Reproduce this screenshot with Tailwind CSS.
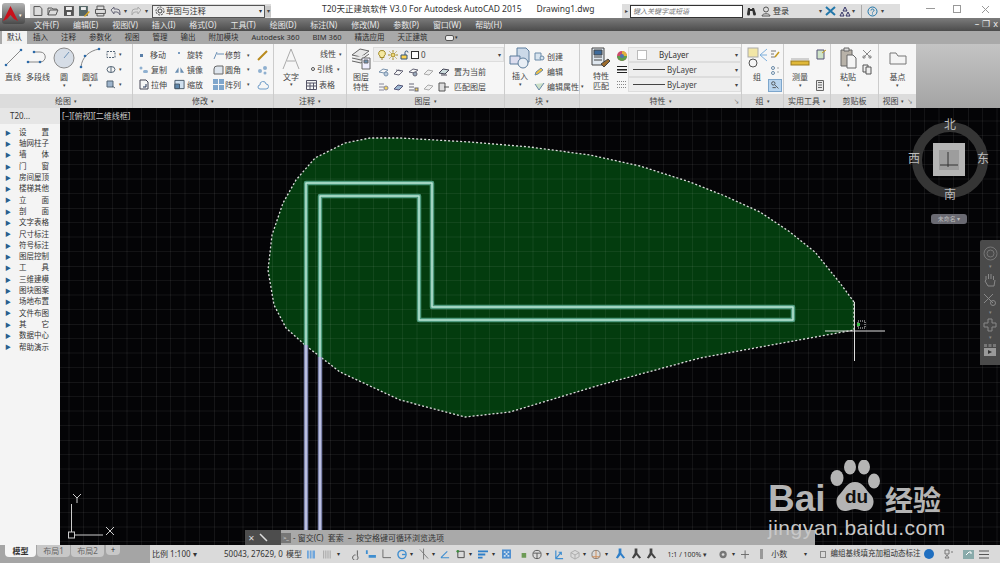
<!DOCTYPE html>
<html lang="zh-CN">
<head>
<meta charset="UTF-8">
<title>T20天正建筑软件</title>
<script src="https://cdn.jsdelivr.net/npm/@tailwindcss/browser@4"></script>
</head>
<body class="w-[1000px] h-[563px] overflow-hidden relative bg-black text-[8px] leading-none text-[#444] font-['Noto_Sans','Noto_Sans_CJK_SC',sans-serif]">

<!-- Title bar -->
<div class="h-[18px] bg-white flex items-end relative">
  <div class="w-[30px] shrink-0"></div>
  <div class="flex items-center gap-[3.500px] h-[14px] bg-[#dcdcdc] pl-[2px] w-[241px]">
    <svg class="w-[12px] h-[12px]" viewBox="0 0 12 12" fill="none" stroke="#555"><path d="M2 1.500h6l2 2v7H2z"/></svg>
    <svg class="w-[12px] h-[12px]" viewBox="0 0 12 12" fill="none" stroke="#555"><path d="M1 10V3h4l1 1h4v1M1 10l2-5h8l-2 5z"/></svg>
    <svg class="w-[12px] h-[12px]" viewBox="0 0 12 12" fill="#555"><path d="M1 1h10v10H1z"/><path d="M3 2h6v3H3zM4 7h4v3H4z" fill="#eee"/></svg>
    <svg class="w-[12px] h-[12px]" viewBox="0 0 12 12" fill="#566"><path d="M1 1h9v10H1z"/><path d="M3 2h5v3H3z" fill="#eee"/><path d="M6 11l5-5 1 1-5 5z" fill="#d9a520"/></svg>
    <svg class="w-[13px] h-[12px]" viewBox="0 0 13 12" fill="none" stroke="#555"><path d="M3 4V1h7v3M1.500 4.500h10v4h-10zM3 8v3h7V8"/></svg>
    <svg class="w-[11px] h-[10px]" viewBox="0 0 11 10" fill="none" stroke="#667"><path d="M1 4l3-3v2h3a3 3 0 0 1 3 3v3a4 4 0 0 0-3-3H4v2z"/></svg>
    <span class="text-[6px]">▾</span>
    <svg class="w-[11px] h-[10px]" viewBox="0 0 11 10" fill="none" stroke="#aaa"><path d="M10 4L7 1v2H4a3 3 0 0 0-3 3v3a4 4 0 0 1 3-3h3v2z"/></svg>
    <span class="text-[6px]">▾</span>
    <div class="w-[114px] h-[13px] bg-[#eee] border border-[#555] flex items-center pl-[2px] gap-[1px] text-[8px] text-[#333]">
      <svg class="w-[10px] h-[10px]" viewBox="0 0 10 10" fill="none" stroke="#444"><circle cx="5" cy="5" r="2"/><circle cx="5" cy="5" r="4" stroke-dasharray="2 1"/></svg>
      <span class="flex-1">草图与注释</span><span class="text-[6px] pr-[2px]">▾</span>
    </div>
    <div class="w-[6px] h-[11px] bg-[#c8c8c8] text-[6px] -ml-[3px] text-center leading-[11px]">▾</div>
  </div>
  <div class="absolute left-[322px] top-[5px] flex gap-[15px] text-[8.500px] text-[#333]">
    <span>T20天正建筑软件 V3.0 For Autodesk AutoCAD 2015</span><span>Drawing1.dwg</span>
  </div>
  <div class="absolute left-[622px] top-[4px] w-[278px] h-[14px] bg-[#dedede] flex items-center">
    <span class="w-[8px] text-center text-[6px]">▸</span>
    <div class="w-[113px] h-[13px] bg-white border border-[#333] italic text-[7px] text-[#777] pl-[2px] leading-[11px]">键入关键字或短语</div>
    <svg class="w-[11px] h-[10px] ml-[3px]" viewBox="0 0 11 10" fill="#333"><path d="M1 8l1-6h2v6a1.500 1.500 0 0 1-3 0zM6 2h2l2 6a1.500 1.500 0 0 1-3 0zM4 3h3v2H4z"/></svg>
    <svg class="w-[10px] h-[11px] ml-[4px]" viewBox="0 0 10 11" fill="none" stroke="#555"><circle cx="5" cy="3.500" r="2.500"/><path d="M1 10c0-3 8-3 8 0z"/></svg>
    <span class="ml-[2px] text-[#333] w-[46px]">登录</span>
    <span class="text-[6px]">▾</span>
    <svg class="w-[11px] h-[10px] ml-[3px]" viewBox="0 0 11 10" stroke="#27a" stroke-width="2"><path d="M1 1l9 8M10 1L1 9"/></svg>
    <svg class="w-[12px] h-[11px] ml-[3px]" viewBox="0 0 12 11" fill="none" stroke="#336"><path d="M6 1l2 4H4zM3 6l2 4H1zM9 6l2 4H7z"/></svg>
    <span class="text-[6px] ml-[1px]">▾</span>
    <div class="w-px h-[13px] bg-[#aaa] ml-[6px]"></div>
    <svg class="w-[11px] h-[11px] ml-[5px]" viewBox="0 0 11 11" fill="none" stroke="#27a"><circle cx="5.500" cy="5.500" r="4.500"/><path d="M4 4.500c0-2 3-2 3 0 0 1-1.500 1-1.500 2M5.500 7.500v1"/></svg>
    <span class="text-[6px] ml-[3px]">▾</span>
  </div>
  <div class="absolute left-[926px] top-[8px] w-[9px] h-px bg-[#999]"></div>
  <div class="absolute left-[953px] top-[5px] w-[8px] h-[8px] border border-[#999]"></div>
  <svg class="absolute left-[981px] top-[5px] w-[9px] h-[9px]" viewBox="0 0 9 9" stroke="#999"><path d="M1 1l7 7M8 1L1 8"/></svg>
</div>

<!-- App logo -->
<div class="absolute left-[2px] top-[3px] w-[23px] h-[21px] rounded-[3px] bg-gradient-to-b from-[#b4b4b4] to-[#4a4a4a] flex items-center pl-[1px] z-10">
  <svg class="w-[15px] h-[16px]" viewBox="0 0 15 16"><path d="M7.500 0L15 15l-4-2-3.500-4L4 13l-4 2z" fill="#c8121c"/></svg>
  <span class="text-[5px] text-white ml-[1px] mt-[4px]">▾</span>
</div>

<!-- Menu bar -->
<div class="h-[13px] bg-gradient-to-b from-[#7c7c7c] to-[#4c4c4c] flex items-center relative text-[#e8e8e8] pl-[34px] gap-[14px] text-[8px]">
  <span>文件(F)</span><span>编辑(E)</span><span>视图(V)</span><span>插入(I)</span><span>格式(O)</span><span>工具(T)</span><span>绘图(D)</span><span>标注(N)</span><span>修改(M)</span><span>参数(P)</span><span>窗口(W)</span><span>帮助(H)</span>
  <div class="absolute right-[2px] top-[1px] flex items-center gap-[3px] text-[#eee] text-[9px]"><span>–</span><span>❐</span><span>x</span></div>
</div>

<!-- Ribbon tabs -->
<div class="h-[13px] bg-[#a9a9a9] flex items-center text-[#2e2e2e] text-[7.500px]">
  <div class="flex items-center gap-[13px] pl-[2px]">
    <span class="bg-[#f2f2f2] h-[13px] px-[5px] leading-[13px] -mr-[8px]">默认</span>
    <span class="ml-[1px]">插入</span><span>注释</span><span>参数化</span><span>视图</span><span>管理</span><span>输出</span><span>附加模块</span><span>Autodesk 360</span><span>BIM 360</span><span>精选应用</span><span>天正建筑</span>
    <span class="flex items-center gap-[1px] ml-[5px]"><span class="w-[9px] h-[6px] rounded-[2px] bg-[#f0f0f0] border border-[#555]"></span><span class="text-[5px]">▾</span></span>
  </div>
</div>

<!-- Ribbon -->
<div class="h-[64px] flex bg-[#f6f6f6]">
  <!-- 绘图 -->
  <div class="w-[133px] flex flex-col border-r border-[#ccc]">
    <div class="flex-1 flex pl-[2px] pt-[3px] text-center">
      <div class="w-[22px] flex flex-col items-center gap-[4px]">
        <svg class="w-[20px] h-[22px]" viewBox="0 0 20 22" fill="#2c6aa8" stroke="#888"><path d="M3 18L18 3" fill="none"/><circle cx="3" cy="18" r="1.300" stroke="none"/><circle cx="18" cy="3" r="1.300" stroke="none"/></svg><span>直线</span></div>
      <div class="w-[28px] flex flex-col items-center gap-[4px]">
        <svg class="w-[24px] h-[22px]" viewBox="0 0 24 22" fill="#2c6aa8" stroke="#888"><path d="M2 15h12c7 0 7-10 0-10H8" fill="none"/><circle cx="2" cy="15" r="1.300" stroke="none"/><circle cx="14" cy="15" r="1.300" stroke="none"/><circle cx="8" cy="5" r="1.300" stroke="none"/></svg><span>多段线</span></div>
      <div class="w-[24px] flex flex-col items-center gap-[4px]">
        <svg class="w-[22px] h-[22px]" viewBox="0 0 22 22"><circle cx="11" cy="11" r="10" fill="#d6dde6" stroke="#8a8a8a"/><path d="M11 11l5-6" stroke="#6f93b8" fill="none"/></svg><span>圆</span><span class="text-[5px] -mt-[2px]">▾</span></div>
      <div class="w-[28px] flex flex-col items-center gap-[4px]">
        <svg class="w-[22px] h-[22px]" viewBox="0 0 22 22" fill="#2c6aa8" stroke="#888"><path d="M2 20C3 10 10 4 20 2" fill="none"/><circle cx="2" cy="20" r="1.300" stroke="none"/><circle cx="6" cy="9" r="1.300" stroke="none"/><circle cx="20" cy="2" r="1.300" stroke="none"/></svg><span>圆弧</span><span class="text-[5px] -mt-[2px]">▾</span></div>
      <div class="flex flex-col gap-[6px] pt-[3px] pl-[2px]">
        <div class="flex items-center gap-[3px]"><svg class="w-[10px] h-[9px]" viewBox="0 0 10 9" fill="none" stroke="#567"><path d="M1 1.500h8v6H1z" stroke-dasharray="2 1"/></svg><span class="text-[5px]">▾</span></div>
        <div class="flex items-center gap-[3px]"><svg class="w-[10px] h-[9px]" viewBox="0 0 10 9" fill="none" stroke="#567"><ellipse cx="5" cy="4.500" rx="4" ry="3"/><path d="M5 2v5"/></svg><span class="text-[5px]">▾</span></div>
        <div class="flex items-center gap-[3px]"><svg class="w-[10px] h-[9px]" viewBox="0 0 10 9" fill="#9db4cc" stroke="#567"><path d="M1 1h6v6H1z"/><path d="M6 6l3 2" /></svg><span class="text-[5px]">▾</span></div>
      </div>
    </div>
    <div class="h-[14px] bg-[#dcdcdc] flex items-center justify-center gap-[3px]"><span>绘图</span><span class="text-[5px]">▾</span></div>
  </div>
  <!-- 修改 -->
  <div class="w-[141px] flex flex-col border-r border-[#ccc]">
    <div class="flex-1 grid grid-cols-[36px_39px_44px_auto] grid-rows-3 pl-[5px] pt-[4px] pb-[2px] items-center">
      <div class="flex items-center gap-[6px] pl-[2px]"><span class="w-[3px] h-[3px] bg-[#5a7fa8]"></span><span class="ml-[1px]">移动</span></div>
      <div class="flex items-center gap-[2px] pl-[3px]"><svg class="w-[8px] h-[8px]" viewBox="0 0 8 8" fill="#7a9cc0"><path d="M1 1h2v2H1z"/></svg><span>旋转</span></div>
      <div class="flex items-center gap-[1px]"><svg class="w-[11px] h-[9px]" viewBox="0 0 11 9" fill="none" stroke="#6a8fb5"><path d="M1 8l3-7M4 3h7"/></svg><span>修剪</span><span class="text-[5px] ml-[5px]">▾</span></div>
      <svg class="w-[11px] h-[11px]" viewBox="0 0 11 11" stroke="#b98a1c" stroke-width="2"><path d="M1 10l9-9"/></svg>
      <div class="flex items-center gap-[2px]"><svg class="w-[11px] h-[9px]" viewBox="0 0 11 9" fill="#8fb0d0"><circle cx="3" cy="3" r="1.500"/><rect x="5" y="5" width="5" height="3" rx="1.500"/></svg><span>复制</span></div>
      <div class="flex items-center gap-[2px]"><svg class="w-[11px] h-[9px]" viewBox="0 0 12 9" fill="#6b8fb2"><path d="M5 8V2L1 8zM7 8V2l4 6z"/></svg><span>镜像</span></div>
      <div class="flex items-center gap-[1px]"><svg class="w-[11px] h-[10px]" viewBox="0 0 11 10" fill="#dfe6ee" stroke="#666"><path d="M1 9V4q0-3 3-3h6v8z"/></svg><span>圆角</span><span class="text-[5px] ml-[5px]">▾</span></div>
      <svg class="w-[11px] h-[10px]" viewBox="0 0 11 10" fill="#8fb0d0"><circle cx="3" cy="6" r="2"/><circle cx="8" cy="3" r="2"/><circle cx="8" cy="8" r="1.500"/></svg>
      <div class="flex items-center gap-[2px]"><svg class="w-[11px] h-[11px]" viewBox="0 0 11 11" fill="none" stroke="#445"><path d="M2 1h6l2 2v7H2z"/><path d="M5 8h3V5" stroke="#235"/></svg><span>拉伸</span></div>
      <div class="flex items-center gap-[2px]"><svg class="w-[11px] h-[11px]" viewBox="0 0 12 11" fill="#cfe0ef" stroke="#456"><path d="M1 1h10v9H1z"/><path d="M1 5h5v5H1z" fill="#5f88ad"/></svg><span>缩放</span></div>
      <div class="flex items-center gap-[1px]"><svg class="w-[11px] h-[11px]" viewBox="0 0 11 11" fill="#7fa6cc"><path d="M0 0h5v5H0zM6 0h5v5H6zM0 6h5v5H0zM6 6h5v5H6z"/></svg><span>阵列</span><span class="text-[5px] ml-[5px]">▾</span></div>
      <svg class="w-[12px] h-[10px]" viewBox="0 0 12 10" fill="none" stroke="#6f9cc8"><path d="M3 9a2 2 0 0 1 0-4 3 3 0 0 1 6-1 2.500 2.500 0 0 1 0 5z"/></svg>
    </div>
    <div class="h-[14px] bg-[#dcdcdc] flex items-center justify-center gap-[3px]"><span>修改</span><span class="text-[5px]">▾</span></div>
  </div>
  <!-- 注释 -->
  <div class="w-[73px] flex flex-col border-r border-[#ccc]">
    <div class="flex-1 flex pl-[5px] pt-[3px]">
      <div class="w-[24px] flex flex-col items-center gap-[2px]">
        <svg class="w-[20px] h-[24px]" viewBox="0 0 20 24" fill="none" stroke="#aaa"><path d="M2 22L10 2l8 20M6 14h8"/></svg><span>文字</span><span class="text-[5px] -mt-[1px]">▾</span></div>
      <div class="flex flex-col gap-[7px] pt-[3px] pl-[3px]">
        <div class="flex items-center gap-[3px] pl-[14px]"><span>线性</span><span class="text-[5px]">▾</span></div>
        <div class="flex items-center gap-[2px] pl-[5px]"><span class="w-[4px] h-[4px] rounded-full border border-[#555]"></span><span>引线</span><span class="text-[5px] ml-[2px]">▾</span></div>
        <div class="flex items-center gap-[2px]"><svg class="w-[11px] h-[10px]" viewBox="0 0 11 10" fill="none" stroke="#556"><path d="M.500.500h10v9H.500zM.500 3h10M.500 6h10M4 3v6.500M7.500 3v6.500"/></svg><span>表格</span></div>
      </div>
    </div>
    <div class="h-[14px] bg-[#dcdcdc] flex items-center justify-center gap-[3px]"><span>注释</span><span class="text-[5px]">▾</span></div>
  </div>
  <!-- 图层 -->
  <div class="w-[158px] flex flex-col border-r border-[#ccc]">
    <div class="flex-1 flex pl-[3px] pt-[3px]">
      <div class="w-[24px] flex flex-col items-center gap-[2px] text-center">
        <svg class="w-[21px] h-[23px]" viewBox="0 0 21 23" fill="#e8e8e8" stroke="#666"><path d="M1 8l8-6 9 2-8 6z"/><path d="M1 11l9 2 8-6M1 14l9 2 6-4"/><path d="M11 11h8v11h-8z" fill="#eef"/><path d="M13 13h4v3h-4z" fill="#6b8fb2"/></svg>
        <span class="leading-[10px] w-[16px]">图层特性</span></div>
      <div class="flex-1 pl-[1px]">
        <div class="w-[131px] h-[15px] bg-[#eee] border border-[#ddd] flex items-center gap-[2px] pl-[4px] text-[8px]">
          <svg class="w-[8px] h-[10px]" viewBox="0 0 8 10" fill="#f5e9a0" stroke="#a28a2a"><path d="M4 .500a3 3 0 0 1 2 5.500v1.500H2V6A3 3 0 0 1 4 .500zM3 9h2"/></svg>
          <svg class="w-[10px] h-[10px]" viewBox="0 0 10 10" fill="#f0d878" stroke="#a28a2a"><circle cx="5" cy="5" r="2"/><path d="M5 0v2M5 8v2M0 5h2M8 5h2M1.500 1.500l1 1M7.500 7.500l1 1M1.500 8.500l1-1M7.500 2.500l1-1"/></svg>
          <svg class="w-[9px] h-[10px]" viewBox="0 0 9 10" fill="#ffd24d" stroke="#357"><path d="M1 5h6v4H1z"/><path d="M5 5V2.500a1.500 1.500 0 0 1 3 0" fill="none"/></svg>
          <span class="w-[8px] h-[8px] bg-white border border-[#333]"></span><span class="flex-1">0</span><span class="text-[6px] pr-[2px]">▾</span></div>
        <div class="flex items-center gap-[4px] pl-[5px] pt-[5px]">
          <svg class="w-[11px] h-[9px]" viewBox="0 0 11 9" fill="none" stroke="#7a93ad"><path d="M1 4l4-3 5 1-4 3z"/><circle cx="8" cy="6" r="2" fill="#bcd"/></svg>
          <svg class="w-[11px] h-[9px]" viewBox="0 0 11 9" fill="none" stroke="#667"><path d="M1 6l4-4 5 1-4 4zM3 2l5 1"/></svg>
          <svg class="w-[11px] h-[9px]" viewBox="0 0 11 9" fill="none" stroke="#667"><path d="M1 4l4-3 5 1-4 3z"/><circle cx="7" cy="6" r="2" fill="#9ab"/></svg>
          <svg class="w-[11px] h-[9px]" viewBox="0 0 11 9" fill="#eee" stroke="#aaa"><path d="M1 6l4-4 5 1-4 4z"/></svg>
          <svg class="w-[12px] h-[10px]" viewBox="0 0 12 10" fill="#cdd" stroke="#445"><path d="M1 6l4-4 6 1-4 4z"/><path d="M3 8h6"/></svg>
          <span>置为当前</span></div>
        <div class="flex items-center gap-[4px] pl-[5px] pt-[5px]">
          <svg class="w-[11px] h-[9px]" viewBox="0 0 11 9" fill="none" stroke="#889"><path d="M1 1h5M1 4h5M1 7h5"/><circle cx="8" cy="5" r="2" fill="#f0d060"/></svg>
          <svg class="w-[11px] h-[9px]" viewBox="0 0 11 9" fill="#9cb7d2" stroke="#557"><path d="M1 6l4-4 5 1-4 4z"/></svg>
          <svg class="w-[11px] h-[9px]" viewBox="0 0 11 9" fill="none" stroke="#667"><path d="M1 1h5M1 4h5M1 7h5"/><rect x="7" y="5" width="3" height="3" fill="#f0d060"/></svg>
          <svg class="w-[11px] h-[9px]" viewBox="0 0 11 9" fill="#eee" stroke="#aaa"><path d="M1 6l4-4 5 1-4 4z"/></svg>
          <svg class="w-[12px] h-[10px]" viewBox="0 0 12 10" fill="#ddd" stroke="#555"><path d="M1 1h6v8H1z"/><path d="M6 5h5"/></svg>
          <span>匹配图层</span></div>
      </div>
    </div>
    <div class="h-[14px] bg-[#dcdcdc] flex items-center justify-center gap-[3px]"><span>图层</span><span class="text-[5px]">▾</span></div>
  </div>
  <!-- 块 -->
  <div class="w-[75px] min-w-0 flex flex-col border-r border-[#ccc]">
    <div class="flex-1 flex pl-[3px] pt-[3px] whitespace-nowrap">
      <div class="w-[24px] flex flex-col items-center gap-[3px] shrink-0">
        <svg class="w-[23px] h-[22px]" viewBox="0 0 23 22" fill="#cbd9e8" stroke="#5d7d9c"><path d="M8 1h9l3 3v11H8z"/><path d="M1 9h10v8H1z" fill="#dde"/><circle cx="14" cy="16" r="5" fill="#e8eef5"/></svg><span>插入</span><span class="text-[5px] -mt-[1px]">▾</span></div>
      <div class="flex flex-col gap-[6px] pt-[5px] pl-[2px]">
        <div class="flex items-center gap-[2px]"><svg class="w-[11px] h-[9px]" viewBox="0 0 11 9" fill="#d8e4ef" stroke="#6a8aa8"><path d="M1 1h6v7H1z"/><circle cx="8" cy="6" r="2"/></svg><span>创建</span></div>
        <div class="flex items-center gap-[2px]"><svg class="w-[11px] h-[9px]" viewBox="0 0 11 9" fill="#f0c040" stroke="#6a8aa8"><path d="M1 8l1-3 5-4 2 2-5 4z"/></svg><span>编辑</span></div>
        <div class="flex items-center gap-[2px]"><svg class="w-[11px] h-[9px]" viewBox="0 0 11 9" fill="#cce0c8" stroke="#6a8aa8"><path d="M1 2l4 6 5-7"/></svg><span>编辑属性</span><span class="text-[5px]">▾</span></div>
      </div>
    </div>
    <div class="h-[14px] bg-[#dcdcdc] flex items-center justify-center gap-[3px]"><span>块</span><span class="text-[5px]">▾</span></div>
  </div>
  <!-- 特性 -->
  <div class="w-[162px] flex flex-col border-r border-[#ccc]">
    <div class="flex-1 flex pl-[11px] pt-[3px]">
      <div class="w-[20px] flex flex-col items-center gap-[2px]">
        <svg class="w-[20px] h-[22px]" viewBox="0 0 20 22" fill="#dfe7ef" stroke="#444"><path d="M1 1h12v17H1z"/><path d="M3 3h8v5H3z" fill="#3e6a9a"/><path d="M3 10h8M3 13h8"/><path d="M10 17l7-5 2 2-6 6z" fill="#9a6a2c"/></svg>
        <span class="leading-[10px] w-[16px] text-center">特性匹配</span></div>
      <div class="flex flex-col gap-[5px] pl-[6px] pt-[4px] w-[17px]">
        <svg class="w-[10px] h-[10px]" viewBox="0 0 10 10"><circle cx="5" cy="5" r="5" fill="#cc4b6b"/><path d="M5 5L10 5A5 5 0 0 1 0 5z" fill="#5d9e4e"/><path d="M5 0a5 5 0 0 1 5 5H5z" fill="#e0b43c"/><circle cx="5" cy="5" r="2" fill="#4d73b0"/></svg>
        <svg class="w-[10px] h-[7px]" viewBox="0 0 10 7" fill="#222"><path d="M0 0h10v1H0zM0 3h10v1.500H0zM0 6h10v1H0z"/></svg>
        <svg class="w-[10px] h-[7px] mt-[3px]" viewBox="0 0 10 7" stroke="#888" stroke-dasharray="1 1"><path d="M0 .500h10M0 3.500h10M0 6.500h10"/></svg>
      </div>
      <div class="w-[113px] flex flex-col">
        <div class="h-[15px] bg-[#eee] border border-[#ddd] flex items-center pl-[8px]"><span class="w-[10px] h-[10px] bg-white border border-[#bbb]"></span><span class="flex-1 pl-[12px] text-[8px] text-[#333]">ByLayer</span><span class="text-[6px] pr-[2px]">▾</span></div>
        <div class="h-[15px] bg-[#eee] border border-[#ddd] flex items-center pl-[4px]"><span class="w-[32px] h-px bg-[#444]"></span><span class="flex-1 pl-[2px] text-[8px]">ByLayer</span><span class="text-[6px] pr-[2px]">▾</span></div>
        <div class="h-[15px] bg-[#eee] border border-[#ddd] flex items-center pl-[4px]"><span class="w-[32px] h-px bg-[#444]"></span><span class="flex-1 pl-[2px] text-[8px]">ByLayer</span><span class="text-[6px] pr-[2px]">▾</span></div>
      </div>
    </div>
    <div class="h-[14px] bg-[#dcdcdc] flex items-center justify-center gap-[3px] relative"><span>特性</span><span class="text-[5px]">▾</span><span class="absolute right-[2px] text-[5px]">↘</span></div>
  </div>
  <!-- 组 -->
  <div class="w-[42px] flex flex-col border-r border-[#ccc]">
    <div class="flex-1 flex pl-[3px] pt-[3px]">
      <div class="w-[24px] flex flex-col items-center gap-[4px]">
        <svg class="w-[21px] h-[22px]" viewBox="0 0 21 22" fill="none" stroke="#555"><rect x="1" y="1" width="10" height="9" fill="#f2e6a6" stroke="#aaa"/><circle cx="6" cy="16" r="4"/><path d="M13 8l7-6M13 8h7M13 8l7 6" stroke="#7fb0dc"/></svg><span>组</span></div>
      <div class="flex flex-col gap-[5px] pt-[3px] pl-[1px]">
        <svg class="w-[10px] h-[10px]" viewBox="0 0 10 10" stroke="#777"><path d="M1 1h5M1 4h3M1 7h4"/><path d="M5 7l4-5" stroke="#c59a1d" stroke-width="1.500"/></svg>
        <svg class="w-[10px] h-[10px]" viewBox="0 0 10 10" fill="none" stroke="#6a8aa8"><circle cx="3" cy="3" r="1.500"/><circle cx="3" cy="8" r="1.500"/><path d="M7 3h2M7 7h2" stroke="#aaa"/></svg>
        <svg class="w-[14px] h-[13px] bg-[#b8d4ee] border border-[#7da6cc] -ml-[2px] -mt-[1px]" viewBox="0 0 14 13" fill="none" stroke="#444"><circle cx="5" cy="4" r="2"/><path d="M7 6l4 4M4 9h4"/></svg>
      </div>
    </div>
    <div class="h-[14px] bg-[#dcdcdc] flex items-center justify-center gap-[3px]"><span>组</span><span class="text-[5px]">▾</span></div>
  </div>
  <!-- 实用工具 -->
  <div class="w-[47px] flex flex-col border-r border-[#ccc]">
    <div class="flex-1 flex pl-[4px] pt-[3px]">
      <div class="w-[24px] flex flex-col items-center gap-[4px]">
        <svg class="w-[20px] h-[22px]" viewBox="0 0 20 22"><path d="M1 12h18" stroke="#aaa"/><rect x="1" y="14" width="18" height="4" fill="#e0b838" stroke="#9a7a20"/></svg><span>测量</span><span class="text-[5px] -mt-[2px]">▾</span></div>
      <div class="flex flex-col justify-between pt-[2px] pb-[3px] pl-[4px]">
        <svg class="w-[11px] h-[11px]" viewBox="0 0 11 11" fill="#cfe3c8" stroke="#557"><path d="M1 1h7v9H1z"/><path d="M6 4l4-3" stroke="#c9a21d"/></svg>
        <svg class="w-[8px] h-[11px]" viewBox="0 0 8 11" fill="#e8e8e8" stroke="#666"><path d="M.500.500h7v10h-7z"/><path d="M2 2.500h4M2 5h4M2 7.500h4"/></svg>
      </div>
    </div>
    <div class="h-[14px] bg-[#dcdcdc] flex items-center justify-center gap-[3px]"><span>实用工具</span><span class="text-[5px]">▾</span></div>
  </div>
  <!-- 剪贴板 -->
  <div class="w-[48px] flex flex-col border-r border-[#ccc]">
    <div class="flex-1 flex pl-[8px] pt-[3px]">
      <div class="w-[18px] flex flex-col items-center gap-[4px]">
        <svg class="w-[17px] h-[22px]" viewBox="0 0 17 22" fill="#b8b2a8" stroke="#666"><path d="M1 3h11v16H1z"/><path d="M4 1h5v3H4z" fill="#ddd"/><path d="M7 8h6l3 3v10H7z" fill="#f4f4f4"/></svg><span>粘贴</span><span class="text-[5px] -mt-[2px]">▾</span></div>
      <div class="flex flex-col gap-[5px] pt-[2px] pl-[5px]">
        <svg class="w-[10px] h-[10px]" viewBox="0 0 10 10" fill="none" stroke="#888"><path d="M1 1l8 8M9 1L1 9"/><circle cx="2" cy="8" r="1.200"/><circle cx="8" cy="8" r="1.200"/></svg>
        <svg class="w-[10px] h-[11px]" viewBox="0 0 10 11" fill="#eee" stroke="#555"><path d="M1 1h5v7H1z"/><path d="M4 3h5v7H4z"/></svg>
      </div>
    </div>
    <div class="h-[14px] bg-[#dcdcdc] flex items-center justify-center"><span>剪贴板</span></div>
  </div>
  <!-- 视图 -->
  <div class="w-[37px] flex flex-col">
    <div class="flex-1 flex flex-col items-center pt-[3px] gap-[4px] bg-[#f6f6f6]">
      <svg class="w-[18px] h-[22px]" viewBox="0 0 18 22" fill="#f4f4f4" stroke="#777"><path d="M1 17V6h6l2 3h8v8z"/></svg><span>基点</span><span class="text-[5px] -mt-[2px]">▾</span>
    </div>
    <div class="h-[14px] bg-[#dcdcdc] flex items-center justify-center gap-[3px]"><span>视图</span><span class="text-[5px]">▾</span><span class="text-[5px]">↘</span></div>
  </div>
  <div class="flex-1 bg-gradient-to-b from-[#c4c4c4] to-[#a4a4a4]"></div>
</div>

<!-- Workspace: side menu + drawing area -->
<div class="h-[437px] flex">
  <div class="w-[60px] bg-[#f4f4f4] text-[7.500px] text-[#333] whitespace-nowrap">
    <div class="h-[16px] bg-[#e6e6e6] flex items-center pl-[10px] text-[8px]">T20...</div>
    <div class="flex flex-col pt-[3px]">
      <div class="h-[11.300px] flex items-center pl-[5px] gap-[8px]"><span class="text-[6px] text-[#2a5f8e]">▶</span><span class="w-[30px] flex justify-between"><span>设</span><span>置</span></span></div>
      <div class="h-[11.300px] flex items-center pl-[5px] gap-[8px]"><span class="text-[6px] text-[#2a5f8e]">▶</span><span class="w-[30px]">轴网柱子</span></div>
      <div class="h-[11.300px] flex items-center pl-[5px] gap-[8px]"><span class="text-[6px] text-[#2a5f8e]">▶</span><span class="w-[30px] flex justify-between"><span>墙</span><span>体</span></span></div>
      <div class="h-[11.300px] flex items-center pl-[5px] gap-[8px]"><span class="text-[6px] text-[#2a5f8e]">▶</span><span class="w-[30px] flex justify-between"><span>门</span><span>窗</span></span></div>
      <div class="h-[11.300px] flex items-center pl-[5px] gap-[8px]"><span class="text-[6px] text-[#2a5f8e]">▶</span><span class="w-[30px]">房间屋顶</span></div>
      <div class="h-[11.300px] flex items-center pl-[5px] gap-[8px]"><span class="text-[6px] text-[#2a5f8e]">▶</span><span class="w-[30px]">楼梯其他</span></div>
      <div class="h-[11.300px] flex items-center pl-[5px] gap-[8px]"><span class="text-[6px] text-[#2a5f8e]">▶</span><span class="w-[30px] flex justify-between"><span>立</span><span>面</span></span></div>
      <div class="h-[11.300px] flex items-center pl-[5px] gap-[8px]"><span class="text-[6px] text-[#2a5f8e]">▶</span><span class="w-[30px] flex justify-between"><span>剖</span><span>面</span></span></div>
      <div class="h-[11.300px] flex items-center pl-[5px] gap-[8px]"><span class="text-[6px] text-[#2a5f8e]">▶</span><span class="w-[30px]">文字表格</span></div>
      <div class="h-[11.300px] flex items-center pl-[5px] gap-[8px]"><span class="text-[6px] text-[#2a5f8e]">▶</span><span class="w-[30px]">尺寸标注</span></div>
      <div class="h-[11.300px] flex items-center pl-[5px] gap-[8px]"><span class="text-[6px] text-[#2a5f8e]">▶</span><span class="w-[30px]">符号标注</span></div>
      <div class="h-[11.300px] flex items-center pl-[5px] gap-[8px]"><span class="text-[6px] text-[#2a5f8e]">▶</span><span class="w-[30px]">图层控制</span></div>
      <div class="h-[11.300px] flex items-center pl-[5px] gap-[8px]"><span class="text-[6px] text-[#2a5f8e]">▶</span><span class="w-[30px] flex justify-between"><span>工</span><span>具</span></span></div>
      <div class="h-[11.300px] flex items-center pl-[5px] gap-[8px]"><span class="text-[6px] text-[#2a5f8e]">▶</span><span class="w-[30px]">三维建模</span></div>
      <div class="h-[11.300px] flex items-center pl-[5px] gap-[8px]"><span class="text-[6px] text-[#2a5f8e]">▶</span><span class="w-[30px]">图块图案</span></div>
      <div class="h-[11.300px] flex items-center pl-[5px] gap-[8px]"><span class="text-[6px] text-[#2a5f8e]">▶</span><span class="w-[30px]">场地布置</span></div>
      <div class="h-[11.300px] flex items-center pl-[5px] gap-[8px]"><span class="text-[6px] text-[#2a5f8e]">▶</span><span class="w-[30px]">文件布图</span></div>
      <div class="h-[11.300px] flex items-center pl-[5px] gap-[8px]"><span class="text-[6px] text-[#2a5f8e]">▶</span><span class="w-[30px] flex justify-between"><span>其</span><span>它</span></span></div>
      <div class="h-[11.300px] flex items-center pl-[5px] gap-[8px]"><span class="text-[6px] text-[#2a5f8e]">▶</span><span class="w-[30px]">数据中心</span></div>
      <div class="h-[11.300px] flex items-center pl-[5px] gap-[8px]"><span class="text-[6px] text-[#2a5f8e]">▶</span><span class="w-[30px]">帮助演示</span></div>
    </div>
  </div>

  <!-- Drawing canvas; svg coordinates equal page coordinates -->
  <div class="flex-1 relative bg-[#040406]">
    <svg class="absolute inset-0 w-[940px] h-[437px]" viewBox="60 108 940 437">
      <defs>
        <pattern id="grid" x="40" y="34" width="58" height="58" patternUnits="userSpaceOnUse">
          <path d="M14.500 0V58M29 0V58M43.500 0V58M0 14.500H58M0 29H58M0 43.500H58" stroke="#fff" stroke-opacity=".06" stroke-width="1" fill="none"/>
          <path d="M0 0V58M0 0H58" stroke="#fff" stroke-opacity=".13" stroke-width="1" fill="none"/>
        </pattern>
      </defs>
      <path d="M854 302L840 283 815 252 790 232 760 212 725 196 690 182 640 166 590 155 530 147 470 142 400 138 370 138 345 143 315 158 296 180 283 203 272 235 268 270 274 305 286 328 305 345 340 372 400 400 465 417 510 412 600 385 700 358 854 330Z" fill="#033c0e" stroke="#ddd" stroke-width="1.300" stroke-dasharray="2 2"/>
      <rect x="60" y="108" width="940" height="437" fill="url(#grid)"/>
      <!-- wall lines -->
      <path d="M306 345V183H432V307H793V320H419V196H320V357" fill="none" stroke="#4e9a7e" stroke-width="4.500" stroke-linejoin="round"/>
      <path d="M306 345V183H432V307H793V320H419V196H320V357" fill="none" stroke="#bce8d6" stroke-width="1.500" stroke-linejoin="round"/>
      <path d="M306 345V530M320 357V530" fill="none" stroke="#7d84ac" stroke-width="4.500"/>
      <path d="M306 345V530M320 357V530" fill="none" stroke="#d0d4f0" stroke-width="1.500"/>
      <!-- crosshair -->
      <path d="M825 331H885M854.500 302V361" stroke="#ddd" stroke-width="1"/>
      <rect x="858" y="321" width="7" height="7" fill="none" stroke="#ddd" stroke-dasharray="1 1"/>
      <rect x="857" y="323" width="3" height="3" fill="#3ec04a"/>
      <!-- UCS icon -->
      <path d="M71.500 504V532M75 535H103" stroke="#ccc" fill="none"/>
      <rect x="68.500" y="532" width="6" height="6" fill="none" stroke="#ccc"/>
      <path d="M73 494l4 4 4-4M77 498v5M106 527l8 8M114 527l-8 8" stroke="#ccc" fill="none"/>
      <!-- view cube ring -->
      <circle cx="950" cy="160" r="33" fill="none" stroke="#353535" stroke-width="10"/>
      <rect x="933" y="143" width="32" height="33" fill="#b5b5b5"/>
      <rect x="939" y="150" width="20" height="20" fill="#9d9d9d"/>
      <path d="M948 152v15M940 165h18" stroke="#333" fill="none"/>
    </svg>
    <div class="absolute left-[2px] top-[4px] text-[8px] text-[#ccc]">[−][俯视][二维线框]</div>
    <!-- compass -->
    <span class="absolute left-[884px] top-[11px] text-[12px] text-[#bbb]">北</span>
    <span class="absolute left-[884px] top-[81px] text-[12px] text-[#bbb]">南</span>
    <span class="absolute left-[848px] top-[45px] text-[12px] text-[#bbb]">西</span>
    <span class="absolute left-[917px] top-[45px] text-[12px] text-[#bbb]">东</span>
    <div class="absolute left-[871px] top-[106px] w-[36px] h-[10px] rounded-[3px] bg-[#6a6a72] text-[6px] text-[#bbb] text-center leading-[10px]">未命名 ▾</div>
    <!-- navigation bar -->
    <div class="absolute right-0 top-[132px] w-[20px] h-[125px] bg-[#4a4a4a] rounded-tl-[2px] flex flex-col items-center gap-[6px] pt-[6px]">
      <svg class="w-[15px] h-[15px]" viewBox="0 0 15 15" fill="none" stroke="#777"><circle cx="7.500" cy="7.500" r="6.500"/><circle cx="7.500" cy="7.500" r="3.500"/></svg>
      <span class="text-[5px] text-[#888] -my-[3px]">▾</span>
      <svg class="w-[14px] h-[15px]" viewBox="0 0 14 15" fill="none" stroke="#888"><path d="M3 8V4M5.500 7V2M8 7V2M10.500 8V4M3 8l-1 1 3 5h6l1-6"/></svg>
      <svg class="w-[14px] h-[14px]" viewBox="0 0 14 14" fill="none" stroke="#888"><path d="M1 1l9 9M10 1L1 10"/><circle cx="10" cy="10" r="2.500"/></svg>
      <span class="text-[5px] text-[#888] -my-[3px]">▾</span>
      <svg class="w-[14px] h-[14px]" viewBox="0 0 14 14" fill="none" stroke="#888"><path d="M5 1h4v4h4v4H9v4H5V9H1V5h4z"/></svg>
      <span class="text-[5px] text-[#888] -my-[3px]">▾</span>
      <svg class="w-[14px] h-[14px]" viewBox="0 0 14 14" fill="#777"><path d="M1 1h3v3H1zM5.500 1h3v3h-3zM10 1h3v3h-3z"/><path d="M1 5h12v8H1z" fill="#999"/><path d="M5 7l4 2-4 2z" fill="#333"/></svg>
    </div>
    <!-- command line -->
    <div class="absolute left-[185px] bottom-0 w-[570px] h-[15px] bg-[#a9a9a9] flex items-center text-[8px] text-[#333]">
      <div class="w-[36px] h-[15px] bg-[#4d4d4d] flex items-center pl-[3px] gap-[4px] text-[#ddd]">
        <span class="text-[8px]">✕</span>
        <svg class="w-[9px] h-[9px]" viewBox="0 0 9 9" stroke="#ddd" stroke-width="1.500"><path d="M1 1l2 2 5 5"/></svg>
      </div>
      <div class="w-[10px] h-[10px] bg-[#777] text-[#eee] text-[6px] leading-[10px] text-center">&gt;_</div>
      <span class="pl-[2px] whitespace-nowrap">- 窗交(C)&nbsp; 套索 &nbsp;–&nbsp; 按空格键可循环浏览选项</span>
    </div>
  </div>
</div>

<!-- Status bar -->
<div class="h-[18px] flex items-center bg-[#dadada] text-[8px] text-[#333]">
  <div class="w-[150px] h-[18px] bg-[#a5a5a5] flex items-start pl-[5px] gap-[1px] shrink-0">
    <span class="w-[31px] h-[12px] bg-[#f5f5f5] rounded-b-[4px] text-center leading-[12px] font-bold">模型</span>
    <span class="w-[33px] h-[12px] bg-[#c8c8c8] rounded-b-[4px] text-center leading-[12px] text-[#666]">布局1</span>
    <span class="w-[33px] h-[12px] bg-[#c8c8c8] rounded-b-[4px] text-center leading-[12px] text-[#666]">布局2</span>
    <span class="w-[14px] h-[10px] bg-[#c8c8c8] rounded-b-[4px] text-center leading-[10px] ml-[1px]">+</span>
  </div>
  <span class="ml-[2px] w-[72px] shrink-0">比例 1:100 ▾</span>
  <span class="w-[62px] shrink-0">50043, 27629, 0</span>
  <span class="w-[21px] shrink-0">模型</span>
  <div class="flex items-center gap-[5.400px] w-[682px] shrink-0">
    <svg class="w-[9px] h-[9px]" viewBox="0 0 9 9" fill="#6fa6dc"><path d="M0 0h2v9H0zM3 0h2v9H3zM6 0h3v9H6z"/></svg>
    <svg class="w-[9px] h-[9px] ml-[2px]" viewBox="0 0 9 9" fill="#aaa"><path d="M0 0h1v9H0zM2 0h1v9H2zM4 0h1v9H4zM6 0h1v9H6zM8 0h1v9H8z"/></svg>
    <span class="text-[6px] ml-[1px]">▾</span>
    <svg class="w-[10px] h-[11px] ml-[5px]" viewBox="0 0 10 11" fill="none" stroke="#555"><path d="M7 1v6a3 3 0 1 1-2-1"/></svg>
    <svg class="w-[12px] h-[10px]" viewBox="0 0 12 10" fill="#3f8ed0"><path d="M1 1h2v4H1zM4 6h8v3H4z"/></svg>
    <svg class="w-[10px] h-[10px] ml-[1px]" viewBox="0 0 10 10" fill="none" stroke="#666"><path d="M1 0v9h9"/></svg>
    <svg class="w-[11px] h-[11px]" viewBox="0 0 11 11" fill="none" stroke="#3f8ed0" stroke-width="1.500"><circle cx="5.500" cy="5.500" r="4.500"/><path d="M5.500 5.500h4"/></svg><span class="text-[6px] -ml-[2px]">▾</span>
    <svg class="w-[11px] h-[12px]" viewBox="0 0 11 12" stroke="#777"><path d="M1 1l9 10M5 0v12"/></svg><span class="text-[6px] -ml-[2px]">▾</span>
    <svg class="w-[11px] h-[9px]" viewBox="0 0 11 9" fill="none" stroke="#3f8ed0" stroke-width="1.200"><path d="M1 8h9M1 8l7-7"/></svg>
    <svg class="w-[10px] h-[10px]" viewBox="0 0 10 10" fill="none" stroke="#444"><path d="M2 2h7v7H2z"/><circle cx="2" cy="2" r="1.500" fill="#3c8a3c" stroke="none"/></svg><span class="text-[6px] -ml-[1px]">▾</span>
    <svg class="w-[11px] h-[9px]" viewBox="0 0 11 9" fill="#2f7fc8"><path d="M0 0h11v2H0zM0 3.500h8v2H0zM0 7h5v2H0z"/></svg><span class="text-[6px] -ml-[1px]">▾</span>
    <svg class="w-[10px] h-[10px] ml-[1px]" viewBox="0 0 10 10" fill="#4f8fd0"><path d="M0 0h10v10H0z"/><path d="M2 2h2v2H2zM6 2h2v2H6zM4 4h2v2H4zM2 6h2v2H2zM6 6h2v2H6z" fill="#cde"/></svg>
    <svg class="w-[10px] h-[10px] ml-[2px]" viewBox="0 0 10 10" fill="#6c9a55"><path d="M1 1l3 3h5v5H4V4z"/></svg>
    <svg class="w-[11px] h-[11px]" viewBox="0 0 11 11" fill="none" stroke="#555"><circle cx="5.500" cy="5.500" r="4.500"/><path d="M1.500 4h8M5.500 4v6"/></svg><span class="text-[6px] -ml-[2px]">▾</span>
    <svg class="w-[11px] h-[11px]" viewBox="0 0 11 11" fill="none" stroke="#3f8ed0" stroke-width="1.300"><path d="M2 1v9h8M2 10l6-7M5 3h3v3"/></svg>
    <svg class="w-[11px] h-[11px]" viewBox="0 0 11 11" fill="none" stroke="#aaa"><path d="M5.500 1L10 3.500v4.500L5.500 10.500 1 8V3.500zM1 3.500L5.500 6 10 3.500M5.500 6v4.500"/></svg><span class="text-[6px] -ml-[2px]">▾</span>
    <svg class="w-[11px] h-[11px]" viewBox="0 0 11 11" fill="none" stroke="#777"><circle cx="5.500" cy="5.500" r="4.500"/><path d="M5.500 1v9M1 8l9 0" stroke="#c85"/></svg><span class="text-[6px] -ml-[2px]">▾</span>
    <svg class="w-[11px] h-[12px] ml-[2px]" viewBox="0 0 11 12" fill="#2f7fc8"><path d="M4 0h3v5l4 5-2 1-3-4-3 4-2-1 3-5z"/></svg>
    <svg class="w-[11px] h-[12px]" viewBox="0 0 11 12" fill="#444"><path d="M4 0h3v5l4 5-2 1-3-4-3 4-2-1 3-5z"/></svg>
    <svg class="w-[11px] h-[12px]" viewBox="0 0 11 12" fill="#444"><path d="M4 0h3v5l4 5-2 1-3-4-3 4-2-1 3-5z"/></svg>
    <span class="whitespace-nowrap ml-[6px] text-[7px]">1:1 / 100% ▾</span>
    <svg class="w-[9px] h-[9px] ml-[6px]" viewBox="0 0 9 9" fill="#777"><circle cx="4.500" cy="4.500" r="4"/><circle cx="4.500" cy="4.500" r="1.500" fill="#ddd"/></svg><span class="text-[6px]">▾</span>
    <svg class="w-[9px] h-[9px]" viewBox="0 0 9 9" stroke="#666"><path d="M4.500 0v9M0 4.500h9"/></svg>
    <span class="w-[3px] h-[10px] bg-[#999] ml-[6px]"></span>
    <span class="ml-[3px] w-[30px]">小数</span><span class="text-[6px]">▾</span>
    <span class="w-[6px] h-[7px] border border-[#888] ml-[8px]"></span>
    <span class="whitespace-nowrap text-[7.500px] -ml-[1px]">编组基线填充加粗动态标注</span>
    <span class="w-[10px] h-[10px] rounded-full bg-[#1f6fc0] shrink-0 -ml-[2px]"></span>
    <svg class="w-[10px] h-[10px] ml-[5px] shrink-0" viewBox="0 0 10 10" fill="none" stroke="#777"><path d="M1 1h4v4H1zM3 6l-2 3h4zM7 3h2"/></svg>
    <svg class="w-[11px] h-[9px] ml-[3px] shrink-0" viewBox="0 0 11 9" fill="#8aa"><path d="M0 0h11v9H0z"/><path d="M3 5l3-3M6 2h2v2" stroke="#fff" fill="none"/></svg>
    <svg class="w-[10px] h-[9px] shrink-0" viewBox="0 0 10 9" stroke="#555"><path d="M0 1h10M0 4.500h10M0 8h10"/></svg>
  </div>
</div>

<!-- Baidu watermark -->
<div class="absolute left-[768px] top-[468px] w-[182px] h-[72px] text-[#b4b4b4] pointer-events-none">
  <span class="absolute left-0 top-[12px] text-[37px] leading-[37px] font-bold font-['Liberation_Sans',sans-serif]">Bai</span>
  <svg class="absolute left-[60px] -top-[8px] w-[56px] h-[56px]" viewBox="0 0 56 56" fill="#b4b4b4">
    <ellipse cx="9" cy="18" rx="6.500" ry="8"/><ellipse cx="22" cy="7" rx="6" ry="7.500"/><ellipse cx="36" cy="7" rx="6" ry="7.500"/><ellipse cx="46" cy="21" rx="6" ry="7.500"/>
    <path d="M27 22c8 0 11 8 15 12 7 6 3 18-6 17-4-.5-6-2-9-2s-5 1.500-9 2c-9 1-13-11-6-17 4-4 7-12 15-12z"/>
  </svg>
  <span class="absolute left-[77px] top-[19px] text-[19px] leading-[19px] font-bold text-[#111] font-['Liberation_Sans',sans-serif]">du</span>
  <span class="absolute left-[117px] top-[16px] text-[28px] leading-[30px] font-bold font-['Noto_Sans_CJK_SC',sans-serif]">经验</span>
  <span class="absolute left-0 top-[48px] text-[21px] leading-[24px] font-['Liberation_Sans',sans-serif] tracking-[.5px] text-[#c8c8c8]">jingyan.baidu.com</span>
</div>
</body>
</html>
